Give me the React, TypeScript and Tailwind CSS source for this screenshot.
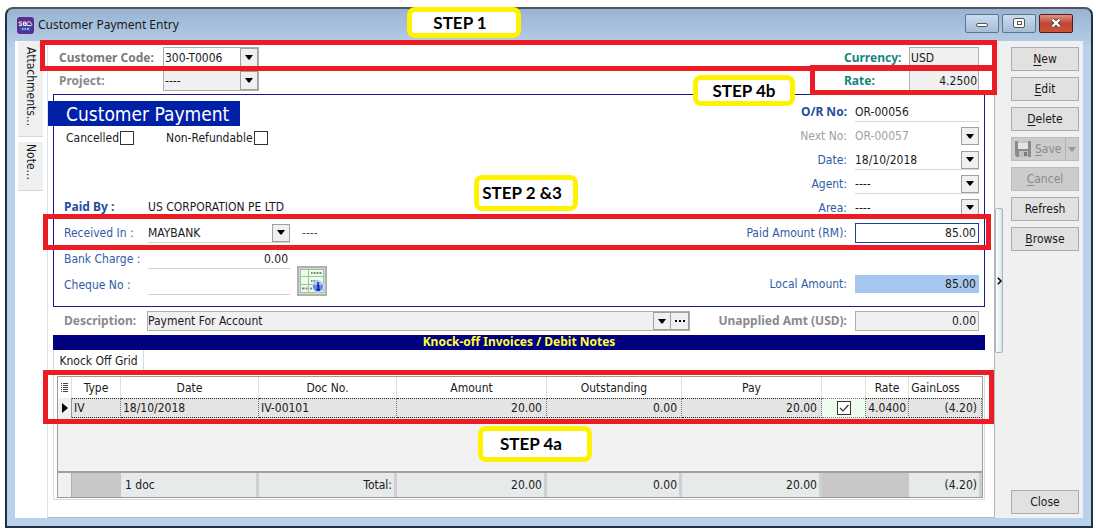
import { useId, type ReactNode } from "react";

const underline = (label: string) => (
  <>
    <span className="underline underline-offset-2">{label[0]}</span>
    {label.slice(1)}
  </>
);

function Caret({ className = "fill-black" }: { className?: string }) {
  return (
    <svg viewBox="0 0 8 5" className={`h-[5px] w-2 ${className}`} aria-hidden="true">
      <path d="M0 0h8L4.6 4.5H3.4z" />
    </svg>
  );
}

function Combo({ id, value, className = "", tone = "text-[#1a1a1a]", box = "bg-[#f0f0f0]" }: { id: string; value: string; className?: string; tone?: string; box?: string }) {
  return (
    <span className={`relative flex ${className}`}>
      <select id={id} defaultValue={value} className={`h-full w-full appearance-none bg-transparent outline-none ${tone}`}>
        <option>{value}</option>
      </select>
      <span className={`pointer-events-none absolute inset-y-0 right-0 flex w-[18px] items-center justify-center border border-[#a0a0a0] ${box}`}>
        <Caret />
      </span>
    </span>
  );
}

function RightRow({ label, labelClass = "text-[#2f5ca6]", height = "h-6", children }: { label: string; labelClass?: string; height?: string; children: (id: string) => ReactNode }) {
  const id = useId();
  return (
    <div className={`flex items-center justify-end gap-2 ${height}`}>
      <label htmlFor={id} className={labelClass}>{label}</label>
      {children(id)}
    </div>
  );
}

function LeftRow({ label, bold = false, children }: { label: string; bold?: boolean; children: (id: string) => ReactNode }) {
  const id = useId();
  return (
    <div className="flex h-[26px] items-center pl-[10px]">
      <label htmlFor={id} className={`w-[84px] shrink-0 ${bold ? "font-['Noto_Sans',sans-serif] font-bold text-[#1f4e9e]" : "text-[#2f5ca6]"}`}>{label}</label>
      {children(id)}
    </div>
  );
}

function Step({ className, children }: { className: string; children: ReactNode }) {
  return (
    <div className={`absolute z-20 flex items-center justify-center rounded-lg border-[5px] border-[#fff200] bg-white font-['Lato',sans-serif] text-[17px] font-bold whitespace-pre text-black ${className}`}>
      {children}
    </div>
  );
}

function Frame({ className }: { className: string }) {
  return <div className={`pointer-events-none absolute z-10 border-[5px] border-[#eb1c24] ${className}`} />;
}

function AppLogo() {
  return (
    <svg viewBox="0 0 17 17" className="size-[17px]" aria-hidden="true">
      <rect width="17" height="17" rx="3" fill="#5b2d91" />
      <path d="M2 5h3M2 7h3M2 5v1.2M5 6.5V8M2 8.6h3M6.5 5h2.5v3.5H6.5zM6.5 6.8h2.5M10 8.6V6.2c0-1.4 1.2-2 2.2-1.2 1.2-.6 1.8.4 1.6 1.4 1.2.2 1.4 1.6.4 2.2z" stroke="#fff" strokeWidth=".9" fill="none" />
      <rect x="3" y="10" width="11" height="4" fill="#2b56b0" />
      <path d="M5 12h1.5M7.5 12h1.5M10 12h2" stroke="#b8d4ff" strokeWidth="1.4" />
    </svg>
  );
}

function CalculatorIcon() {
  return (
    <svg viewBox="0 0 24 24" className="size-6" aria-hidden="true">
      <rect width="24" height="24" fill="#8fcb8f" />
      <path d="M1 1h7v6H1zM9 1h14v6H9zM1 8h7v7H1zM9 8h14v7H9zM1 16h7v7H1zM9 16h14v7H9z" fill="#eefbee" />
      <path d="M11 4h1.500M13.500 4h2M16.500 4h2M19.500 4h2M11 12h1.500M13.500 12h2M16.500 12h2M2 19.500h2.500M5.500 19.500h2M10 19.500h2" stroke="#7b887b" strokeWidth="2" />
      <circle cx="18" cy="17.500" r="5.600" fill="#5f8be6" stroke="#d5def5" strokeWidth="1.200" />
      <path d="M13.800 15.500a4.600 4.600 0 0 1 8.400 0q-4 2-8.400 0z" fill="#c0d3fa" />
      <path d="M16.800 16.300h1.600v4.400M16.400 20.900h3.600M18.200 13.200v1.700" stroke="#0a23a8" strokeWidth="1.900" fill="none" />
    </svg>
  );
}

function DiskIcon() {
  return (
    <svg viewBox="0 0 16 16" className="size-4" aria-hidden="true">
      <path d="M0 0h16v16H2l-2-2z" fill="#8a8a8a" />
      <path d="M3 0h10v8H3z" fill="#e4e4e4" />
      <path d="M3 0h10v2H3z" fill="#c4c4c4" />
      <path d="M4 10h9v6H4z" fill="#c0c0c0" />
      <path d="M9 11h3v4H9z" fill="#7a7a7a" />
    </svg>
  );
}

const sideButton = "h-6 w-[68px] shrink-0 border border-[#adadad] bg-[#e1e1e1] text-[#1a1a1a]";

const columns = [
  { title: "", width: "w-[14px]" },
  { title: "Type", width: "w-[49px]" },
  { title: "Date", width: "w-[138px]" },
  { title: "Doc No.", width: "w-[138px]" },
  { title: "Amount", width: "w-[150px]" },
  { title: "Outstanding", width: "w-[135px]" },
  { title: "Pay", width: "w-[140px]" },
  { title: "", width: "w-[44px]" },
  { title: "Rate", width: "w-[43px]" },
  { title: "GainLoss", width: "w-[73px]" },
];

function KnockOffTable() {
  const base = "border-r border-dotted border-r-[#777] border-y border-y-[#222] bg-[#e4e4e4] py-0";
  const cell = `${base} px-0.5`;
  const amount = `${base} pr-1 pl-0 text-right`;
  const total = "border-r-[3px] border-[#cfcfcf] bg-[#e6eaea] py-0 pr-0.5 text-right";
  return (
    <table className="w-full table-fixed border-separate border-spacing-0 border border-[#9a9a9a] text-xs leading-4">
      <thead>
        <tr className="h-[21px]">
          {columns.map((c, i) => (
            <th key={i} className={`border-r border-[#e0e0e0] p-0 font-normal last:border-r-0 ${c.width} ${c.title === "GainLoss" ? "pr-5" : ""}`}>
              {i === 0 ? (
                <svg viewBox="0 0 8 9" className="mx-auto h-[9px] w-2" aria-label="Columns">
                  <path d="M0 .5h1M2 .5h5M0 2.5h1M2 2.5h5M0 4.5h1M2 4.5h5M0 6.5h1M2 6.5h5M0 8.5h1M2 8.5h5" stroke="#444" />
                </svg>
              ) : c.title}
            </th>
          ))}
        </tr>
      </thead>
      <tbody>
        <tr className="h-5">
          <td className="border-r border-[#999] bg-[#f0f0f0] p-0">
            <svg viewBox="0 0 6 10" className="mx-auto h-[10px] w-[6px]" aria-hidden="true"><path d="M0 0l6 5-6 5z" /></svg>
          </td>
          <td className={cell}>IV</td>
          <td className={cell}>18/10/2018</td>
          <td className={cell}>IV-00101</td>
          <td className={amount}>20.00</td>
          <td className={amount}>0.00</td>
          <td className={amount}>20.00</td>
          <td className="border-r border-y border-dotted border-[#777] bg-[#edfced] p-0">
            <span className="relative mx-auto block size-[14px]">
              <input type="checkbox" defaultChecked aria-label="Knock off IV-00101" className="block size-[14px] appearance-none border border-[#333] bg-white" />
              <svg viewBox="0 0 14 14" className="pointer-events-none absolute inset-0" aria-hidden="true"><path d="M3 7l3 3 5.500-6" fill="none" stroke="#333" strokeWidth="1.200" /></svg>
            </span>
          </td>
          <td className={`${cell} text-right`}>4.0400</td>
          <td className={amount}>(4.20)</td>
        </tr>
        <tr className="h-[55px]">
          <td colSpan={10} className="border-b-2 border-[#a0a0a0] bg-[#f2f2f2]" />
        </tr>
      </tbody>
      <tfoot>
        <tr className="h-6">
          <td className="border-r border-[#b0b0b0] bg-[#f0f0f0]" />
          <td className="bg-[#c8c8c8]" />
          <td className="border-r-[3px] border-[#cfcfcf] bg-[#e6eaea] py-0 pl-1">1 doc</td>
          <td className={total}>Total:</td>
          <td className={total}>20.00</td>
          <td className={total}>0.00</td>
          <td className={total}>20.00</td>
          <td className="bg-[#c8c8c8]" />
          <td className="bg-[#c8c8c8]" />
          <td className={total}>(4.20)</td>
        </tr>
      </tfoot>
    </table>
  );
}

export default function App() {
  const field = "border border-[#adadad] bg-[#f0f0f0] outline-none";
  const bold = "font-['Noto_Sans',sans-serif] font-bold";
  return (
    <div className="flex min-h-screen bg-white pt-[7px] pr-[3px] pb-[3px] pl-[5px] font-['DejaVu_Sans_Condensed','DejaVu_Sans',sans-serif] text-xs leading-4 text-[#1a1a1a]">
      <div className="relative flex min-w-0 flex-1 flex-col rounded-t-lg border-2 border-[#1d3440] border-t-[#555] bg-linear-to-b from-[#98b4d2] to-[#b9d1ea] to-[40px] px-2 pb-2">
        <Step className="-top-[2px] left-[400px] h-[31px] w-[114px] pr-2">STEP 1</Step>
        <header className="flex h-8 items-center">
          <span className="pl-[2px]"><AppLogo /></span>
          <h1 className="flex-1 pl-1 font-['Noto_Sans',sans-serif] text-xs">Customer Payment Entry</h1>
          <div className="flex gap-[3px] pb-1">
            <button aria-label="Minimize" className="flex h-[19px] w-[34px] items-center justify-center rounded-xs border border-[#5e7590] bg-linear-to-b from-[#cbdcee] to-[#a5bdd8]">
              <span className="mt-1 h-1 w-3 rounded-xs border border-[#555] bg-white" />
            </button>
            <button aria-label="Maximize" className="flex h-[19px] w-[34px] items-center justify-center rounded-xs border border-[#5e7590] bg-linear-to-b from-[#cbdcee] to-[#a5bdd8]">
              <span className="flex h-[10px] w-3 items-center justify-center rounded-xs border border-[#555] bg-white"><span className="h-1 w-[5px] border border-[#555]" /></span>
            </button>
            <button aria-label="Close window" className="mr-[10px] flex h-[19px] w-[34px] items-center justify-center rounded-xs border border-[#5a1a12] bg-linear-to-b from-[#dd9284] via-[#c2452f] to-[#c9563c]">
              <svg viewBox="0 0 12 10" className="h-[10px] w-3" aria-hidden="true">
                <path d="M2.500 1.500l7 7M9.500 1.500l-7 7" stroke="#444" strokeWidth="4" />
                <path d="M2.500 1.500l7 7M9.500 1.500l-7 7" stroke="#fff" strokeWidth="2.400" />
              </svg>
            </button>
          </div>
        </header>

        <div className="flex flex-1 bg-white">
          <nav className="flex w-8 shrink-0 flex-col gap-[5px] pl-[3px]">
            <button className="flex h-24 w-[25px] items-center justify-start border-b border-[#d8d8d8] bg-[#f0f0f0] pt-[6px] text-xs [writing-mode:vertical-rl]">Attachments...</button>
            <button className="flex h-[49px] w-[25px] items-center justify-start border-b border-[#d8d8d8] bg-[#f0f0f0] pt-[2px] text-xs [writing-mode:vertical-rl]">Note...</button>
          </nav>

          <main className="relative flex min-w-0 flex-1 flex-col border-x border-b border-l-[#cfe6f7] border-r-[#b8b8b8] border-b-[#b8b8b8] pt-[6px] pr-[9px] pl-[5px]">
            <Frame className="-top-[1px] -right-[3px] -left-[8px] h-[31px]" />
            <Frame className="top-6 -right-[3px] h-[30px] w-[187px]" />
            <Step className="top-[34px] right-[199px] h-[31px] w-[102px]">STEP 4b</Step>

            <div className="flex h-[21px] items-center pr-[6px] pl-[6px]">
              <label htmlFor="customer" className={`w-[104px] text-[#7a7a7a] ${bold}`}>Customer Code:</label>
              <Combo id="customer" value="300-T0006" className="h-[21px] w-24 border border-[#adadad] pl-px" />
              <label htmlFor="currency" className={`ml-auto w-[65px] text-[#16857f] ${bold}`}>Currency:</label>
              <input id="currency" readOnly defaultValue="USD" className={`h-[21px] w-[70px] pl-px ${field}`} />
            </div>
            <div className="mt-[2px] flex h-[21px] items-center pr-[6px] pl-[6px]">
              <label htmlFor="project" className={`w-[104px] text-[#8a8a8a] ${bold}`}>Project:</label>
              <Combo id="project" value="----" className="h-[21px] w-24 border border-[#adadad] bg-[#f0f0f0] pl-px" />
              <label htmlFor="rate" className={`ml-auto w-[65px] text-[#16857f] ${bold}`}>Rate:</label>
              <input id="rate" readOnly defaultValue="4.2500" className={`h-[21px] w-[70px] pr-px text-right ${field}`} />
            </div>

            <section className="relative mt-[3px] flex justify-between border border-[#1a1a8c] pb-2">
              <Frame className="top-[119px] -right-[7px] -left-[11px] h-9" />
              <Step className="top-20 left-[420px] h-9 w-[104px] pr-2">STEP 2 &amp;3</Step>
              <div className="pt-[6px]">
                <h2 className="-ml-[6px] flex h-[25px] w-[192px] items-center bg-[#0020a8] pl-[18px] text-[19px] text-white">Customer Payment</h2>
                <div className="flex h-6 items-center pl-3">
                  <label className="flex items-center gap-px">Cancelled <input type="checkbox" className="size-[14px] appearance-none border border-[#333] bg-white" /></label>
                  <label className="ml-8 flex items-center gap-px">Non-Refundable <input type="checkbox" className="size-[14px] appearance-none border border-[#333] bg-white" /></label>
                </div>
                <div className="mt-11">
                  <LeftRow label="Paid By :" bold>{(id) => <input id={id} defaultValue="US CORPORATION PE LTD" className="w-48 outline-none" />}</LeftRow>
                  <LeftRow label="Received In :">
                    {(id) => (
                      <>
                        <Combo id={id} value="MAYBANK" className="h-[19px] w-[142px] border-b border-[#d0d0d0]" />
                        <span className="pl-3 text-[#555]">----</span>
                      </>
                    )}
                  </LeftRow>
                  <LeftRow label="Bank Charge :">{(id) => <input id={id} defaultValue="0.00" className="h-5 w-[142px] border-b border-[#d0d0d0] pr-0.5 text-right outline-none" />}</LeftRow>
                  <LeftRow label="Cheque No :">
                    {(id) => (
                      <>
                        <input id={id} className="h-5 w-[142px] border-b border-[#d0d0d0] outline-none" />
                        <button aria-label="Cheque calculator" className="mb-2 ml-[7px] flex size-[30px] items-center justify-center border-2 border-[#b0b0b0] bg-[#d8d8d8]"><CalculatorIcon /></button>
                      </>
                    )}
                  </LeftRow>
                </div>
              </div>
              <div className="pt-[5px] pr-[5px]">
                <RightRow label="O/R No:" labelClass={`text-[#1f4e9e] ${bold}`}>{(id) => <input id={id} defaultValue="OR-00056" className="h-5 w-[124px] border-b border-[#d8d8d8] outline-none" />}</RightRow>
                <RightRow label="Next No:" labelClass="text-[#a0a0a0]">{(id) => <Combo id={id} value="OR-00057" tone="text-[#a0a0a0]" className="h-[18px] w-[124px]" />}</RightRow>
                <RightRow label="Date:">{(id) => <Combo id={id} value="18/10/2018" className="h-[19px] w-[124px] border-b border-[#d8d8d8]" />}</RightRow>
                <RightRow label="Agent:">{(id) => <Combo id={id} value="----" className="h-[19px] w-[124px] border-b border-[#d8d8d8]" />}</RightRow>
                <RightRow label="Area:">{(id) => <Combo id={id} value="----" className="h-[19px] w-[124px] border-b border-[#d8d8d8]" />}</RightRow>
                <RightRow label="Paid Amount (RM):" height="h-[26px]">{(id) => <input id={id} defaultValue="85.00" className="h-5 w-[124px] border border-[#1f3f9e] bg-white pr-0.5 text-right outline-none" />}</RightRow>
                <div className="h-[26px]" />
                <RightRow label="Local Amount:">{(id) => <input id={id} readOnly defaultValue="85.00" className="h-[18px] w-[124px] bg-[#a6c8ee] pr-[3px] text-right outline-none" />}</RightRow>
              </div>
            </section>

            <div className="mt-1 flex h-5 items-center pr-[6px] pl-[11px]">
              <label htmlFor="description" className={`w-[83px] shrink-0 text-[#8a8a8a] ${bold}`}>Description:</label>
              <div className="flex h-5 min-w-0 flex-1 border border-[#adadad] bg-[#f0f0f0]">
                <Combo id="description" value="Payment For Account" className="min-w-0 flex-1" />
                <button aria-label="More descriptions" className="flex w-[18px] items-center justify-center gap-[2px] border border-l-0 border-[#a0a0a0]">
                  <span className="size-[2px] bg-black" /><span className="size-[2px] bg-black" /><span className="size-[2px] bg-black" />
                </button>
              </div>
              <label htmlFor="unapplied" className={`w-[165px] shrink-0 pr-2 text-right text-[#8a8a8a] ${bold}`}>Unapplied Amt (USD):</label>
              <input id="unapplied" readOnly defaultValue="0.00" className={`h-5 w-[124px] pr-0.5 text-right ${field}`} />
            </div>

            <h3 className={`mt-1 h-[15px] bg-[#000080] text-center leading-[14px] text-[#ffff3c] ${bold}`}>Knock-off Invoices / Debit Notes</h3>
            <button className="h-[21px] w-[91px] self-start border-x border-[#d8d8d8] text-center">Knock Off Grid</button>
            <div className="relative border border-[#dcdcdc] pt-1 pr-px pb-px pl-[3px]">
              <Frame className="-top-[2px] -right-[10px] -left-[11px] h-[54px]" />
              <Step className="top-[54px] left-[424px] h-9 w-[114px] pr-2">STEP 4a</Step>
              <KnockOffTable />
            </div>
          </main>

          <aside className="flex w-[88px] shrink-0 bg-[#f0f0f0]">
            <button aria-label="Collapse panel" className="mt-[167px] flex h-[145px] w-2 items-center justify-center rounded-xs border border-[#a8b4bc] bg-linear-to-r from-white to-[#d5e3ea]">
              <svg viewBox="0 0 5 8" className="h-2 w-[5px] shrink-0" aria-hidden="true"><path d="M.8.8L4 4 .8 7.200" fill="none" stroke="#000" strokeWidth="1.500" /></svg>
            </button>
            <div className="flex flex-col gap-[6px] pt-[6px] pb-1 pl-2">
              <button className={sideButton}>{underline("New")}</button>
              <button className={sideButton}>{underline("Edit")}</button>
              <button className={sideButton}>{underline("Delete")}</button>
              <div className="flex h-6 w-[68px] border border-[#bcbcbc] bg-[#cccccc] text-[#8a8a8a]">
                <button disabled className="flex flex-1 items-center gap-1 pl-[3px]"><DiskIcon /><span>{underline("Save")}</span></button>
                <button disabled aria-label="Save options" className="flex w-[13px] items-center justify-center border-l border-[#b4b4b4]"><Caret className="fill-[#999]" /></button>
              </div>
              <button disabled className="h-6 w-[68px] border border-[#bcbcbc] bg-[#cccccc] text-[#8a8a8a]">{underline("Cancel")}</button>
              <button className={sideButton}>Refresh</button>
              <button className={sideButton}>{underline("Browse")}</button>
              <button className={`mt-auto ${sideButton}`}>Close</button>
            </div>
          </aside>
        </div>
      </div>
    </div>
  );
}
